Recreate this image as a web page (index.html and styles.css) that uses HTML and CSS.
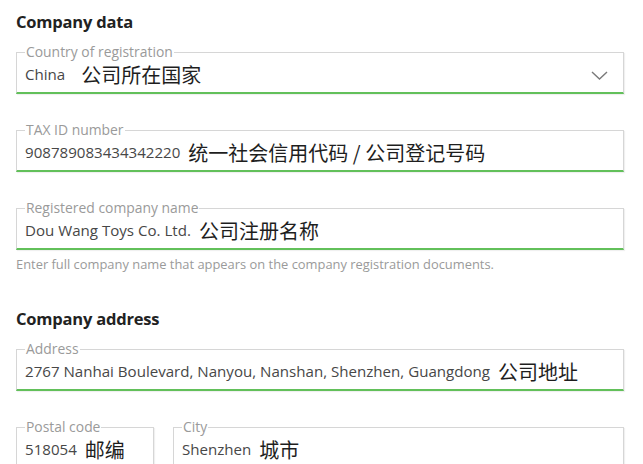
FILE: index.html
```html
<!DOCTYPE html>
<html>
<head>
<meta charset="utf-8">
<link rel="stylesheet" href="styles.css">
</head>
<body>
<main class="form">
  <h2 class="section-title">Company data</h2>

  <fieldset class="field">
    <legend class="field-label">Country of registration</legend>
    <div class="field-value select">
      <span class="latin">China</span><span class="cjk gap-l">公司所在国家</span>
      <svg class="chevron" width="17" height="9" viewBox="0 0 17 9"><path d="M1 1 L8.5 8 L16 1" fill="none" stroke="#7a7a7a" stroke-width="1.4"/></svg>
    </div>
  </fieldset>

  <fieldset class="field">
    <legend class="field-label">TAX ID number</legend>
    <div class="field-value">
      <span class="latin">908789083434342220</span><span class="cjk gap-s">统一社会信用代码 / 公司登记号码</span>
    </div>
  </fieldset>

  <fieldset class="field">
    <legend class="field-label">Registered company name</legend>
    <div class="field-value">
      <span class="latin">Dou Wang Toys Co. Ltd.</span><span class="cjk gap-s">公司注册名称</span>
    </div>
  </fieldset>
  <p class="helper">Enter full company name that appears on the company registration documents.</p>

  <h2 class="section-title second">Company address</h2>

  <fieldset class="field">
    <legend class="field-label">Address</legend>
    <div class="field-value">
      <span class="latin">2767 Nanhai Boulevard, Nanyou, Nanshan, Shenzhen, Guangdong</span><span class="cjk gap-s">公司地址</span>
    </div>
  </fieldset>

  <div class="row">
    <fieldset class="field postal">
      <legend class="field-label">Postal code</legend>
      <div class="field-value">
        <span class="latin">518054</span><span class="cjk gap-s">邮编</span>
      </div>
    </fieldset>
    <fieldset class="field city">
      <legend class="field-label">City</legend>
      <div class="field-value">
        <span class="latin">Shenzhen</span><span class="cjk gap-s">城市</span>
      </div>
    </fieldset>
  </div>
</main>
</body>
</html>
```
FILE: styles.css
```css
html, body {
  margin: 0;
  padding: 0;
  background: #ffffff;
  overflow: hidden;
}
body {
  font-family: "Open Sans", "Noto Sans CJK SC", sans-serif;
  color: #444;
}
.form {
  width: 608px;
  padding: 10px 0 0 16px;
}
.section-title {
  margin: 0 0 10px 0;
  font-size: 16.5px;
  line-height: 24px;
  font-weight: 700;
  color: #222;
  letter-spacing: -0.2px;
}
.section-title.second {
  margin-top: 35px;
}
.field {
  margin: 0 0 28px 0;
  padding: 0 9px 0 8px;
  border: 1px solid #d6d6d6;
  border-bottom: 2px solid #62c05a;
  box-shadow: 1px 1px 1px rgba(0,0,0,0.06);
  min-width: 0;
}
.field-label {
  padding: 0 1px;
  font-size: 13.9px;
  line-height: 16px;
  color: #9a9a9a;
}
.field-value {
  display: flex;
  align-items: center;
  height: 22px;
  padding: 3px 0 7px 0;
  white-space: nowrap;
}
.latin {
  font-size: 15.1px;
  color: #474747;
}
.cjk {
  font-family: "Noto Sans CJK SC", sans-serif;
  font-size: 20px;
  color: #1e1e1e;
}
.gap-l { margin-left: 16px; }
.gap-s { margin-left: 8px; }
.select .chevron {
  margin-left: auto;
  margin-right: 6px;
  margin-top: 2px;
}
.helper {
  margin: -22px 0 0 0;
  font-size: 12.9px;
  line-height: 16px;
  color: #9a9a9a;
}
.row {
  display: flex;
  gap: 19px;
}
.postal {
  width: 138px;
  box-sizing: border-box;
  flex: none;
}
.city {
  flex: 1;
}
```
